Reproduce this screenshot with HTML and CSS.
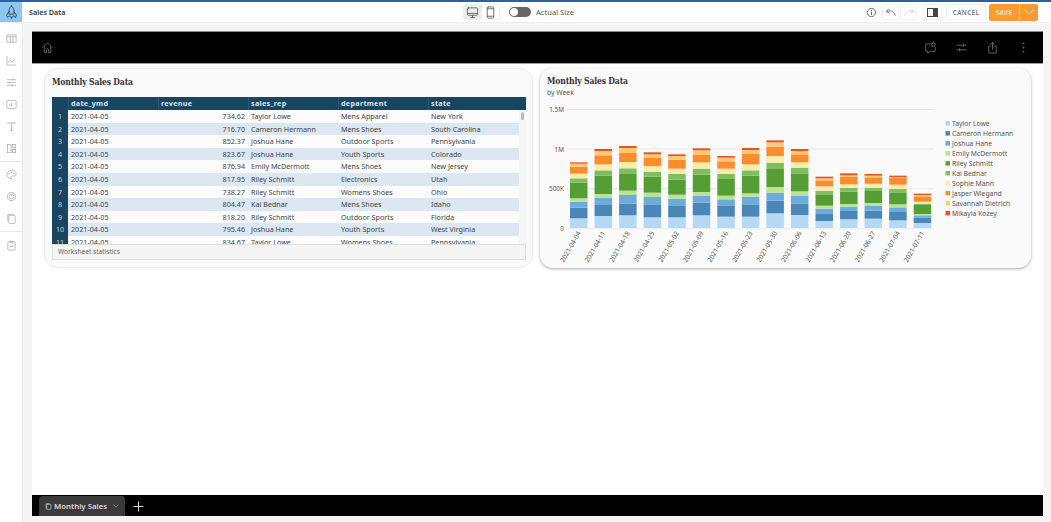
FILE: index.html
```html
<!DOCTYPE html>
<html lang="en">
<head>
<meta charset="utf-8">
<title>Sales Data</title>
<link rel="stylesheet" href="styles.css">
</head>
<body>
<div class="app">
  <header class="topbar">
    <div class="logo">
      <svg viewBox="0 0 16 18" width="13" height="15" class="line dark"><path d="M8 1c3 2.500 3.600 6 3 10H5C4.400 7 5 3.500 8 1zM5 8l-3 4 1 3 3-2M11 8l3 4-1 3-3-2M7 14l1 2.500 1-2.500"/></svg>
    </div>
    <div class="doc-title">Sales Data</div>
    <div class="center">
      <div class="segments">
        <span class="seg active"><svg viewBox="0 0 14 14" width="13" height="13" class="line"><rect x="1.500" y="2" width="11" height="8" rx="1"/><path d="M1.500 8h11M5 12.500h4M7 10v2.500"/></svg></span>
        <span class="seg"><svg viewBox="0 0 14 14" width="13" height="13" class="line"><rect x="3.500" y="1" width="7" height="12" rx="1"/><path d="M3.500 3h7M3.500 11h7"/></svg></span>
      </div>
      <span class="toggle"><span class="knob"></span></span>
      <span class="toggle-label">Actual Size</span>
    </div>
    <div class="actions">
      <svg viewBox="0 0 12 12" width="11" height="11" class="line info"><circle cx="6" cy="6" r="4.500"/><path d="M6 5.500v3M6 3.500v1"/></svg>
      <span class="ico-btn"><svg viewBox="0 0 14 10" width="12" height="9" class="line"><path d="M4 1L1.500 4 5 5.500M2 4c4-2 8-1 10 4"/></svg></span>
      <span class="ico-btn off"><svg viewBox="0 0 14 10" width="12" height="9" class="line"><path d="M10 1l2.500 3L9 5.500M12 4C8 2 4 3 2 8"/></svg></span>
      <span class="panel-btn"><span class="panel-ico"></span></span>
      <span class="cancel">CANCEL</span>
      <span class="save">SAVE</span>
      <span class="save-drop"><svg viewBox="0 0 10 6" width="10" height="6" class="line white"><path d="M1 1l4 4 4-4"/></svg></span>
    </div>
  </header>
  <div class="body">
    <nav class="sidebar">
      <div class="side-group first">
        <svg viewBox="0 0 12 12" class="side-ico"><rect x="1" y="2" width="10" height="8"/><path d="M1 4h10M4.500 4v6M7.500 4v6"/></svg>
        <svg viewBox="0 0 12 12" class="side-ico"><path d="M1 1v10h10M2 8l2.500-2 2 1.500L10 4.500"/></svg>
        <svg viewBox="0 0 12 12" class="side-ico"><path d="M1 3h10M1 6h10M1 9h10M7.500 2v2M3.500 5v2M6.500 8v2"/></svg>
        <svg viewBox="0 0 12 12" class="side-ico"><rect x="1" y="1.500" width="10" height="9" rx="1"/><path d="M4 8V6M6 8V4M8 8V7"/></svg>
        <svg viewBox="0 0 12 12" class="side-ico"><path d="M2 3V2h8v1M6 2v8.500M4.500 10.500h3"/></svg>
        <svg viewBox="0 0 12 12" class="side-ico"><rect x="1.500" y="1.500" width="4" height="9"/><rect x="7" y="1.500" width="3.500" height="4"/><rect x="7" y="7" width="3.500" height="3.500"/></svg>
      </div>
      <div class="side-group">
        <svg viewBox="0 0 12 12" class="side-ico"><path d="M6 1.500C3 1.500 1 3.500 1 6s2 4.500 4.500 4.500c1 0 1-1 .6-1.500-.4-.7 0-1.500 1-1.500H9c1.200 0 2-.8 2-2 0-2.500-2.500-4.500-5-4.500z"/><circle cx="3.500" cy="5" r=".5"/><circle cx="6" cy="3.500" r=".5"/><circle cx="8.500" cy="5" r=".5"/></svg>
        <svg viewBox="0 0 12 12" class="side-ico"><circle cx="6" cy="6" r="4.500"/><circle cx="6" cy="6" r="2.500"/></svg>
        <svg viewBox="0 0 12 12" class="side-ico"><rect x="3" y="2.500" width="7" height="9" rx="1"/><path d="M2 9V1.500h6"/></svg>
      </div>
      <div class="side-group last">
        <svg viewBox="0 0 12 12" class="side-ico"><rect x="2" y="2" width="8" height="9" rx="1"/><path d="M4.500 1.200h3v1.600h-3zM4 8l1.500-1.500L6.500 7.500 8 5.500"/></svg>
      </div>
    </nav>
    <div class="canvas">
      <section class="dashboard">
        <div class="dash-bar">
          <svg viewBox="0 0 14 14" width="13" height="13" class="line dim"><path d="M2 7l5-5 5 5M3.500 6v6.500h2.500V9a1 1 0 0 1 2 0v3.500h2.500V6"/></svg>
          <div class="dash-tools">
            <svg viewBox="0 0 14 14" width="13" height="13" class="line dim"><path d="M7 3H2v8h2v2l3-2h5V7"/><path d="M10 1l.8 1.700 1.700.3-1.200 1.200.3 1.800-1.600-.9-1.600.9.300-1.800L7.500 3l1.700-.3z"/></svg>
            <svg viewBox="0 0 14 14" width="13" height="13" class="line dim"><path d="M2 4.500h10M2 9.500h10M9 3v3M5 8v3"/></svg>
            <svg viewBox="0 0 14 14" width="13" height="13" class="line dim"><path d="M4.500 5.500H3v7.500h8V5.500H9.500M7 9V1.500M5 3.500l2-2 2 2"/></svg>
            <svg viewBox="0 0 14 14" width="13" height="13" class="dots"><circle cx="7" cy="2.500" r="1"/><circle cx="7" cy="7" r="1"/><circle cx="7" cy="11.500" r="1"/></svg>
          </div>
        </div>
        <main class="dash-main">
          <article class="card table-card">
            <h2 class="card-title table-title">Monthly Sales Data</h2>
            <div class="sheet">
              <div class="row head"><span></span><span>date_ymd</span><span>revenue</span><span>sales_rep</span><span>department</span><span>state</span></div>
              <div class="sheet-body">
                <div class="row"><span class="num">1</span><span>2021-04-05</span><span class="money">734.62</span><span>Taylor Lowe</span><span>Mens Apparel</span><span>New York</span></div>
                <div class="row"><span class="num">2</span><span>2021-04-05</span><span class="money">716.70</span><span>Cameron Hermann</span><span>Mens Shoes</span><span>South Carolina</span></div>
                <div class="row"><span class="num">3</span><span>2021-04-05</span><span class="money">852.37</span><span>Joshua Hane</span><span>Outdoor Sports</span><span>Pennsylvania</span></div>
                <div class="row"><span class="num">4</span><span>2021-04-05</span><span class="money">823.67</span><span>Joshua Hane</span><span>Youth Sports</span><span>Colorado</span></div>
                <div class="row"><span class="num">5</span><span>2021-04-05</span><span class="money">876.94</span><span>Emily McDermott</span><span>Mens Shoes</span><span>New Jersey</span></div>
                <div class="row"><span class="num">6</span><span>2021-04-05</span><span class="money">817.95</span><span>Riley Schmitt</span><span>Electronics</span><span>Utah</span></div>
                <div class="row"><span class="num">7</span><span>2021-04-05</span><span class="money">738.27</span><span>Riley Schmitt</span><span>Womens Shoes</span><span>Ohio</span></div>
                <div class="row"><span class="num">8</span><span>2021-04-05</span><span class="money">804.47</span><span>Kai Bednar</span><span>Mens Shoes</span><span>Idaho</span></div>
                <div class="row"><span class="num">9</span><span>2021-04-05</span><span class="money">818.20</span><span>Riley Schmitt</span><span>Outdoor Sports</span><span>Florida</span></div>
                <div class="row"><span class="num">10</span><span>2021-04-05</span><span class="money">795.46</span><span>Joshua Hane</span><span>Youth Sports</span><span>West Virginia</span></div>
                <div class="row"><span class="num">11</span><span>2021-04-05</span><span class="money">834.67</span><span>Taylor Lowe</span><span>Womens Shoes</span><span>Pennsylvania</span></div>
                <span class="thumb"></span>
              </div>
              <div class="stats">Worksheet statistics</div>
            </div>
          </article>
          <article class="card chart-card">
            <h2 class="card-title">Monthly Sales Data</h2>
            <p class="card-sub">by Week</p>
            <svg id="chart" class="chart" viewBox="540 99 491 168" width="491" height="168">
              <g class="grid">
                <path d="M567 109.500H934"/>
                <path class="thick" d="M567 149H934"/>
                <path class="thick" d="M567 188.700H934"/>
                <path class="thick" d="M567 228.500H934"/>
              </g>
              <g class="y-labels">
                <text x="564" y="111.500">1.5M</text>
                <text x="564" y="151.500">1M</text>
                <text x="564" y="191">500K</text>
                <text x="564" y="230.500">0</text>
              </g>
              <g id="bars"></g>
              <g id="xlabels" class="x-labels"></g>
              <g class="legend">
                <rect class="s0" x="945.500" y="120.500" width="4.500" height="4.500"/><text x="952" y="125">Taylor Lowe</text>
                <rect class="s1" x="945.500" y="130.500" width="4.500" height="4.500"/><text x="952" y="135">Cameron Hermann</text>
                <rect class="s2" x="945.500" y="140.500" width="4.500" height="4.500"/><text x="952" y="145">Joshua Hane</text>
                <rect class="s3" x="945.500" y="150.500" width="4.500" height="4.500"/><text x="952" y="155">Emily McDermott</text>
                <rect class="s4" x="945.500" y="160.500" width="4.500" height="4.500"/><text x="952" y="165">Riley Schmitt</text>
                <rect class="s5" x="945.500" y="170.300" width="4.500" height="4.500"/><text x="952" y="175">Kai Bednar</text>
                <rect class="s6" x="945.500" y="180.300" width="4.500" height="4.500"/><text x="952" y="185">Sophie Mann</text>
                <rect class="s7" x="945.500" y="190.300" width="4.500" height="4.500"/><text x="952" y="195">Jasper Wiegand</text>
                <rect class="s8" x="945.500" y="200.300" width="4.500" height="4.500"/><text x="952" y="205">Savannah Dietrich</text>
                <rect class="s9" x="945.500" y="210.300" width="4.500" height="4.500"/><text x="952" y="215">Mikayla Kozey</text>
              </g>
            </svg>
          </article>
        </main>
        <footer class="tabs">
          <span class="tab">
            <svg viewBox="0 0 10 10" width="7" height="7" class="line light"><rect x="3" y="2" width="5.500" height="7"/><path d="M1.500 7.500V1h5"/></svg>
            <span class="tab-name">Monthly Sales</span>
            <svg viewBox="0 0 10 6" width="6" height="4" class="line light"><path d="M1 1l4 4 4-4"/></svg>
          </span>
          <svg viewBox="0 0 12 12" width="11" height="11" class="line plus"><path d="M6 1v10M1 6h10"/></svg>
        </footer>
      </section>
    </div>
  </div>
</div>
<script src="chart.js"></script>
</body>
</html>
```
FILE: styles.css
```css
* { box-sizing: border-box; }
html, body { margin: 0; height: 100%; }
body { font-family: "Noto Sans", "Open Sans", sans-serif; color: #444; background: #fff; overflow: hidden; }
.app { display: flex; flex-direction: column; height: 522px; width: 1051px; }

.line { fill: none; stroke: #666; stroke-width: 1; stroke-linejoin: round; stroke-linecap: round; }
.line.dark { stroke: #234; }
.line.white { stroke: #fff; }
.line.dim { stroke: #666; }
.line.light { stroke: #bbb; }
.line.plus { stroke: #eee; }

.topbar { display: flex; align-items: center; height: 23px; flex: none; border-top: 2px solid #2f5f9e; border-bottom: 1px solid #eee; background: #fff; }
.logo { width: 22px; height: 20px; background: #8fc6ef; display: flex; align-items: center; justify-content: center; flex: none; }
.doc-title { font-size: 7.2px; font-weight: 600; color: #333; margin-left: 7px; width: 434px; flex: none; }
.center { display: flex; align-items: center; }
.segments { display: flex; height: 16px; border: 1px solid #f0f0f0; border-radius: 2px; width: 37px; }
.seg { flex: 1; display: flex; align-items: center; justify-content: center; }
.seg.active { background: #ececec; }
.toggle { width: 22px; height: 10px; border-radius: 5px; background: #666; margin-left: 9px; padding: 1px; display: flex; }
.knob { width: 8px; height: 8px; border-radius: 50%; background: #fff; }
.toggle-label { font-size: 7.6px; color: #555; margin-left: 5px; }

.actions { display: flex; align-items: center; margin-left: auto; padding-right: 13px; height: 100%; }
.info { margin-right: 5px; }
.ico-btn { width: 17px; height: 16px; border: 1px solid #f2f2f2; display: flex; align-items: center; justify-content: center; margin-right: 1px; border-radius: 2px; }
.ico-btn.off svg { stroke: #ccc; }
.panel-btn { width: 19px; height: 16px; border: 1px solid #f0f0f0; border-radius: 2px; margin-left: 5px; display: flex; align-items: center; justify-content: center; }
.panel-ico { width: 11px; height: 9px; border: 1px solid #444; border-right-width: 5px; }
.cancel { width: 40px; height: 16px; border: 1px solid #f0f0f0; border-radius: 2px; margin-left: 4px; font-size: 6.4px; letter-spacing: .3px; font-weight: 600; color: #777; display: flex; align-items: center; justify-content: center; }
.save { width: 30px; height: 17px; margin-left: 3px; background: #fb9a2e; color: #ffe3bd; font-size: 6.4px; font-weight: 700; letter-spacing: .3px; display: flex; align-items: center; justify-content: center; border-radius: 2px 0 0 2px; }
.save-drop { width: 19px; height: 17px; background: #fb9a2e; border-left: 1px solid #fdd7a8; border-radius: 0 2px 2px 0; display: flex; align-items: center; justify-content: center; }

.body { flex: 1; display: flex; min-height: 0; }
.sidebar { width: 23px; flex: none; background: #fff; border-right: 1px solid #eaeaea; display: flex; flex-direction: column; padding-top: 5px; }
.side-group { display: flex; flex-direction: column; align-items: center; gap: 11px; padding: 7px 0 7px; border-bottom: 1px solid #e8e8e8; }
.side-group.first { padding-top: 5px; }
.side-group.last { border-bottom: 0; padding-top: 8px; }
.side-ico { width: 11px; height: 11px; fill: none; stroke: #b0b0b0; stroke-width: .9; }

.canvas { flex: 1; min-width: 0; background: #f5f5f5; padding: 8px 8px 6px 9px; display: flex; }
.dashboard { flex: 1; display: flex; flex-direction: column; background: #fff; }
.dash-bar { height: 33px; flex: none; background: #000; border-top: 1px solid #888; border-bottom: 1px solid #999; display: flex; align-items: center; justify-content: space-between; padding: 0 13px 0 9px; }
.dash-tools { display: flex; gap: 18px; }
.dots { fill: #666; }

.dash-main { flex: 1; min-height: 0; display: flex; align-items: flex-start; gap: 7px; padding: 4px 0 0 12px; background: #fff; }
.card { height: 200px; background: #fafafa; border-radius: 13px; flex: none; }
.table-card { width: 489px; border: 1px solid #ececec; padding: 7px 7px 0; }
.chart-card { width: 491px; padding: 7px 0 0 7px; box-shadow: 0 1px 3px rgba(0,0,0,.35); position: relative; }
.card-title { margin: 0; font-family: "DejaVu Serif", serif; font-stretch: condensed; font-size: 8.500px; letter-spacing: -.15px; line-height: 12px; font-weight: 700; color: #333; }
.table-title { height: 21px; }
.card-sub { margin: 0; font-size: 6.800px; line-height: 11px; color: #555; }
.chart { position: absolute; left: 0; top: 31px; }

.sheet { width: 474px; }
.row { display: grid; grid-template-columns: 16px 90px 90px 90px 90px 91px; height: 12.600px; font-size: 7.200px; line-height: 12.600px; background: #fcfcfc; white-space: nowrap; color: #444; }
.row > span { padding: 0 3px; overflow: hidden; }
.sheet-body .row:nth-child(even) { background: #dde7f1; }
.row .num { background: #1a4560; color: #c4d2dc; text-align: center; padding: 0; }
.row .money { text-align: right; }
.row.head { background: #1a4560; color: #dfe7ec; font-weight: 700; letter-spacing: .3px; height: 13px; line-height: 13px; grid-template-columns: 16px 90px 90px 90px 90px 98px; width: 474px; }
.row.head > span + span { border-left: 1px solid #2a5a78; padding-left: 2px; }
.sheet-body { height: 134px; overflow: hidden; position: relative; background: #f6f6f6; }
.sheet-body .row { width: 467px; }
.thumb { position: absolute; right: 2px; top: 2px; width: 3.500px; height: 8px; background: #bbb; border-radius: 2px; }
.stats { height: 16px; background: #f5f5f5; border: 1px solid #ddd; font-size: 6.600px; line-height: 14px; padding-left: 5px; color: #666; }

.grid path { stroke: #e6e6e6; stroke-width: 1; fill: none; }
.grid .thick { stroke: #eee; stroke-width: 1.500; }
.y-labels text { font-size: 6.400px; text-anchor: end; fill: #555; }
.x-labels text { font-size: 6.600px; text-anchor: end; fill: #555; }
.legend { transform: translateY(.6px); }
.legend text { font-size: 6.800px; fill: #555; }
.s0 { fill: #b5d9f5; }
.s1 { fill: #4a86b8; }
.s2 { fill: #6cabdb; }
.s3 { fill: #bce293; }
.s4 { fill: #559e36; }
.s5 { fill: #7dbf5e; }
.s6 { fill: #fcecaa; }
.s7 { fill: #fc8c2d; }
.s8 { fill: #fdc878; }
.s9 { fill: #e2551f; }

.tabs { height: 21px; flex: none; background: #000; display: flex; align-items: flex-end; padding-left: 7px; }
.tab { width: 86px; height: 20px; background: #3a3a3a; border-radius: 4px 4px 0 0; display: flex; align-items: center; padding-left: 6px; gap: 2px; }
.tab-name { font-size: 7.800px; font-weight: 600; color: #ddd; width: 57px; }
.plus { margin: 0 0 4px 8px; }
```
FILE: chart.js
```js
// Segment tops for each weekly bar, stacked from the axis upwards.
var WEEKS = ["2021-04-04","2021-04-11","2021-04-18","2021-04-25","2021-05-02","2021-05-09","2021-05-16","2021-05-23","2021-05-30","2021-06-06","2021-06-13","2021-06-20","2021-06-27","2021-07-04","2021-07-11"];
var TOPS = [
  [475,443,425,415,368,355,341,320,311,307],
  [468,435,413,402,347,331,313,286,273,267],
  [466,431,405,392,342,325,306,279,264,258],
  [472,433,411,398,350,335,318,294,283,277],
  [472,438,416,404,359,342,326,299,288,283],
  [466,428,408,396,344,326,307,285,271,265],
  [470,436,418,407,357,342,326,304,293,288],
  [470,433,410,400,347,331,313,281,270,264],
  [460,422,398,381,327,308,288,260,247,241],
  [465,431,408,394,340,323,307,283,273,267],
  [483,460,446,437,403,392,379,361,355,350],
  [478,453,440,432,395,384,373,351,346,340],
  [476,452,438,429,393,384,371,352,347,342],
  [481,456,442,433,397,387,374,354,351,347],
  [489,473,466,462,435,431,425,409,405,401]
];
var NS = "http://www.w3.org/2000/svg";
var bars = document.getElementById("bars");
var labels = document.getElementById("xlabels");
TOPS.forEach(function (tops, i) {
  var x = 570 + i * 24.55;
  var prev = 228;
  tops.forEach(function (t, s) {
    var y = 60 + t / 3;
    var r = document.createElementNS(NS, "rect");
    r.setAttribute("class", "s" + s);
    r.setAttribute("x", x);
    r.setAttribute("y", y);
    r.setAttribute("width", 17.5);
    r.setAttribute("height", Math.max(prev - y, 0));
    bars.appendChild(r);
    prev = y;
  });
  var cx = x + 11;
  var label = document.createElementNS(NS, "text");
  label.setAttribute("transform", "translate(" + cx + " 233) rotate(-60)");
  label.textContent = WEEKS[i];
  labels.appendChild(label);
});
```
